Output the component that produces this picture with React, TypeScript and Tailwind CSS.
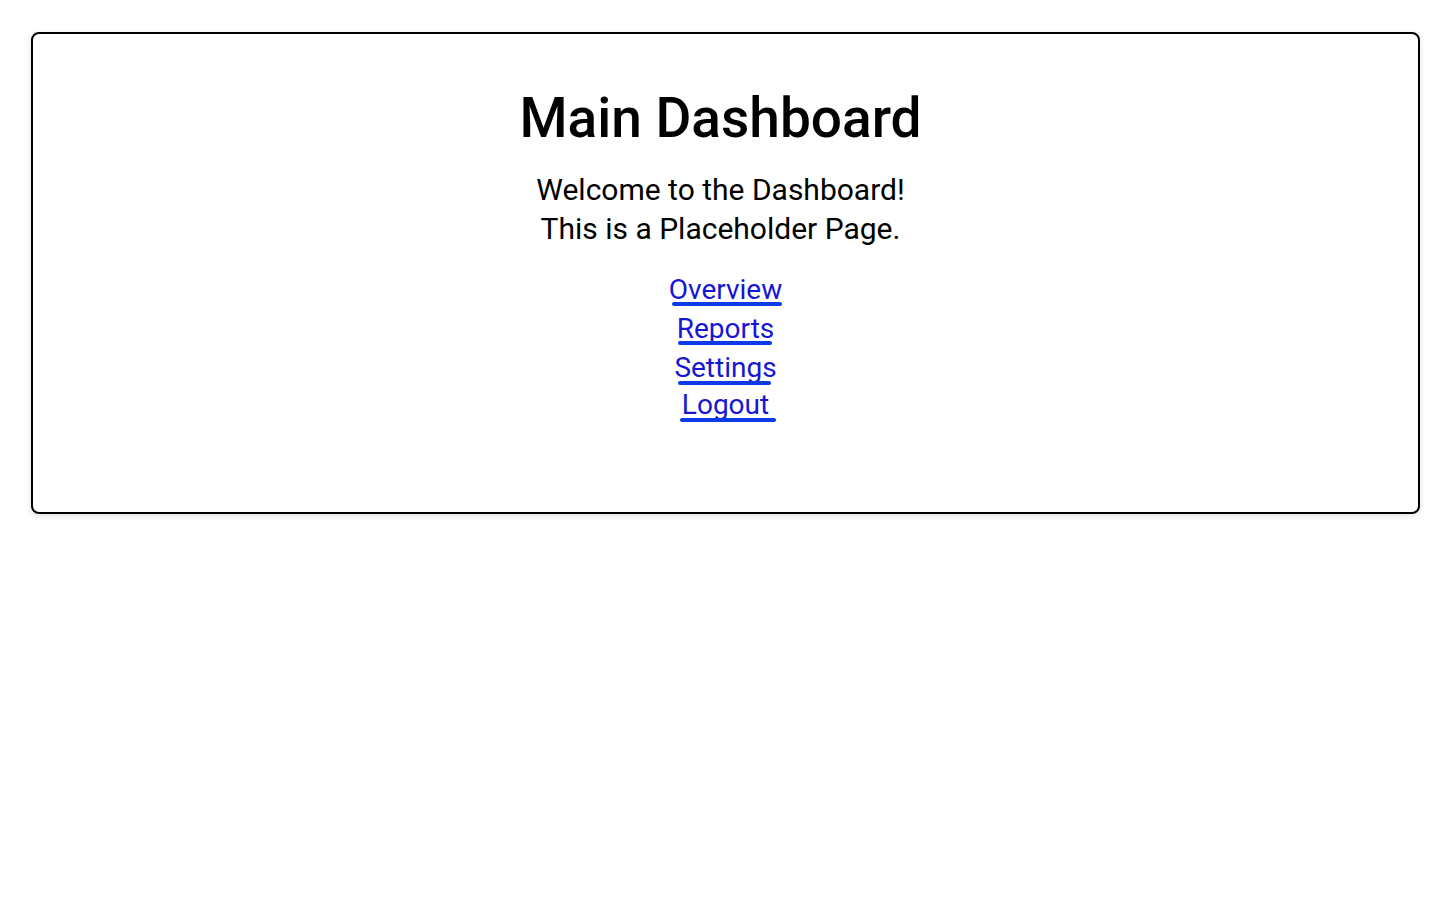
const links = [
  { label: "Overview", href: "#overview", bar: "left-[3px] right-0" },
  { label: "Reports", href: "#reports", bar: "left-[1px] right-[2px]" },
  { label: "Settings", href: "#settings", bar: "left-[4px] right-[6px] top-[33px]" },
  { label: "Logout", href: "#logout", bar: "-left-[2px] -right-[7px] top-[33px]" },
];

export default function App() {
  return (
    <div className="min-h-screen bg-white font-['Roboto',sans-serif] text-black">
      <div className="ml-[31px] w-[1389px] pt-[32px]">
        <div className="rounded-lg border-2 border-black bg-white pl-6 pr-[34px] pt-[51px] pb-[88px] text-center shadow-[0_2px_6px_rgba(0,0,0,0.12)]">
          <h1 className="text-[55px] font-medium leading-[66px]">Main Dashboard</h1>
          <p className="mt-[19px] text-[30px] leading-[39px]">
            Welcome to the Dashboard!
            <br />
            This is a Placeholder Page.
          </p>
          <nav className="mt-[22px] flex flex-col items-center">
            {links.map((link, i) => (
              <a
                key={link.label}
                href={link.href}
                className={
                  "pl-[10px] text-[28px] leading-[39px] text-[#1616d4]" + (i === 3 ? " -mt-[2px]" : "")
                }
              >
                <span className="relative inline-block">
                  {link.label}
                  <span
                    className={"absolute top-[32px] h-[4px] rounded-full bg-[#0b3ae6] " + link.bar}
                  />
                </span>
              </a>
            ))}
          </nav>
        </div>
      </div>
    </div>
  );
}
